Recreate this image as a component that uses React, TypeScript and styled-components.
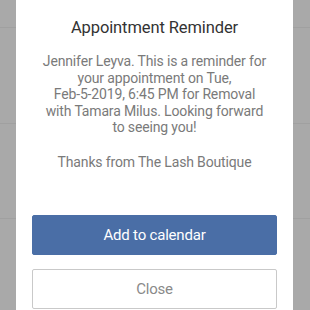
import React from 'react'
import styled, { createGlobalStyle } from 'styled-components'

const GlobalStyle = createGlobalStyle`
	html, body {
		margin: 0;
		padding: 0;
		height: 100%;
	}
	body {
		font-family: Roboto, 'Liberation Sans', sans-serif;
		background: #a9a9a9;
	}
`

const Backdrop = styled.div`
	position: relative;
	width: 310px;
	height: 310px;
	overflow: hidden;
	background: #a9a9a9;
	display: flex;
	justify-content: center;
`

const BackdropLine = styled.div<{ $top: number }>`
	position: absolute;
	left: 0;
	right: 0;
	top: ${p => p.$top}px;
	height: 1px;
	background: #a0a0a0;
`

const Modal = styled.div`
	position: relative;
	z-index: 1;
	width: 277px;
	margin-left: -1px;
	background: #ffffff;
	display: flex;
	flex-direction: column;
	align-items: center;
	padding: 16px 16px 0;
	box-sizing: border-box;
`

const Title = styled.h2`
	margin: 0;
	font-size: 16.5px;
	font-weight: 400;
	letter-spacing: -0.1px;
	color: #333333;
	line-height: 24px;
`

const Message = styled.p`
	margin: 13px 0 0;
	font-size: 14px;
	letter-spacing: -0.15px;
	line-height: 16.5px;
	color: #7a7a7a;
	text-align: center;
	white-space: nowrap;
`

const Signature = styled.p`
	margin: 18px 0 0;
	font-size: 14px;
	letter-spacing: -0.15px;
	line-height: 17px;
	color: #7a7a7a;
	text-align: center;
`

const Actions = styled.div`
	align-self: stretch;
	display: flex;
	flex-direction: column;
	gap: 14px;
	margin-top: 44px;
`

const Button = styled.button<{ $primary?: boolean }>`
	height: 40px;
	width: 100%;
	border-radius: 2px;
	font-family: Roboto, 'Liberation Sans', sans-serif;
	font-size: 15px;
	letter-spacing: -0.2px;
	cursor: pointer;
	border: 1px solid ${p => (p.$primary ? '#4a6ea6' : '#c9c9c9')};
	background: ${p => (p.$primary ? '#4a6ea6' : '#ffffff')};
	color: ${p => (p.$primary ? '#ffffff' : '#8a8a8a')};
`

export default function App() {
	return (
		<>
			<GlobalStyle />
			<Backdrop>
				<BackdropLine $top={27} />
				<BackdropLine $top={123} />
				<BackdropLine $top={218} />
				<Modal>
					<Title>Appointment Reminder</Title>
					<Message>
						Jennifer Leyva. This is a reminder for
						<br />
						your appointment on Tue,
						<br />
						Feb-5-2019, 6:45 PM for Removal
						<br />
						with Tamara Milus. Looking forward
						<br />
						to seeing you!
					</Message>
					<Signature>Thanks from The Lash Boutique</Signature>
					<Actions>
						<Button $primary>Add to calendar</Button>
						<Button>Close</Button>
					</Actions>
				</Modal>
			</Backdrop>
		</>
	)
}
